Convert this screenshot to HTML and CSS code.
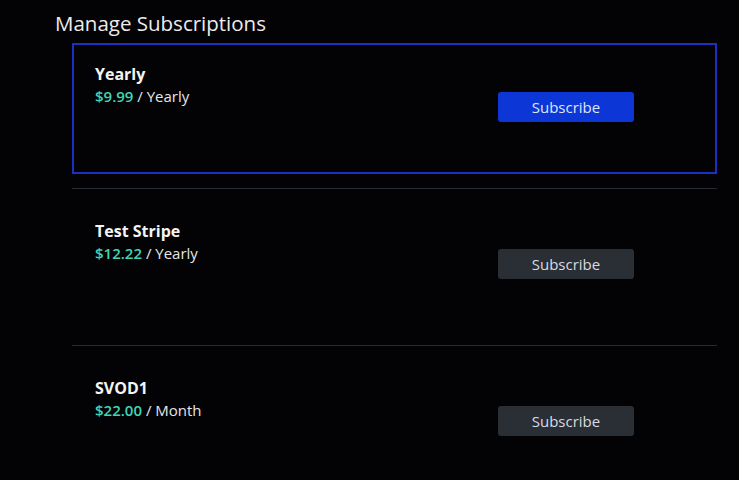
FILE: index.html
```html
<!DOCTYPE html>
<html lang="en">
<head>
    <meta charset="UTF-8">
    <meta name="viewport" content="width=device-width, initial-scale=1.0">
    <title>Manage Subscriptions</title>
    <link rel="stylesheet" href="styles.css">
</head>
<body>
    <div class="page">
        <h1>Manage Subscriptions</h1>

        <div class="plans">
            <div class="plan selected">
                <div class="plan-info">
                    <div class="plan-name">Yearly</div>
                    <div class="plan-price"><span class="amount">$9.99</span> / Yearly</div>
                </div>
                <button class="subscribe-btn">Subscribe</button>
            </div>
            <hr class="divider">
            <div class="plan">
                <div class="plan-info">
                    <div class="plan-name">Test Stripe</div>
                    <div class="plan-price"><span class="amount">$12.22</span> / Yearly</div>
                </div>
                <button class="subscribe-btn">Subscribe</button>
            </div>
            <hr class="divider">
            <div class="plan">
                <div class="plan-info">
                    <div class="plan-name">SVOD1</div>
                    <div class="plan-price"><span class="amount">$22.00</span> / Month</div>
                </div>
                <button class="subscribe-btn">Subscribe</button>
            </div>
        </div>
    </div>
</body>
</html>
```

FILE: styles.css
```css
html, body { margin: 0; background-color: #030306; }
body { font-family: "Open Sans", "Noto Sans", sans-serif; color: #f0f0f0; height: 480px; overflow: hidden; }
.page { padding: 9px 22px 0 55px; }
h1 { margin: 0 0 6px 0; font-size: 20.5px; font-weight: 400; line-height: 28px; color: #ececec; }
.plans { margin-left: 17px; width: 645px; }
.plan { display: flex; align-items: center; justify-content: space-between; box-sizing: border-box; height: 131px; padding: 18px 81px 0 21px; border: 2px solid transparent; }
.plan.selected { border-color: #1a30c0; }
.plan-info { align-self: flex-start; }
.plan-name { font-size: 16px; font-weight: 700; line-height: 22px; color: #f4f4f4; }
.plan-price { font-size: 15px; line-height: 22px; color: #e6e6e6; }
.amount { color: #3fd6b6; font-weight: 600; }
.subscribe-btn { width: 136px; height: 30px; margin-bottom: 22px; border: none; border-radius: 3px; background-color: #2a2e35; color: #d8dbe0; font-family: "Open Sans", "Noto Sans", sans-serif; font-size: 15px; }
.selected .subscribe-btn { background-color: #0c36d6; color: #dfe6ff; }
.divider { margin: 14px 0 11px 0; border: none; border-top: 1px solid #262a31; }
```
